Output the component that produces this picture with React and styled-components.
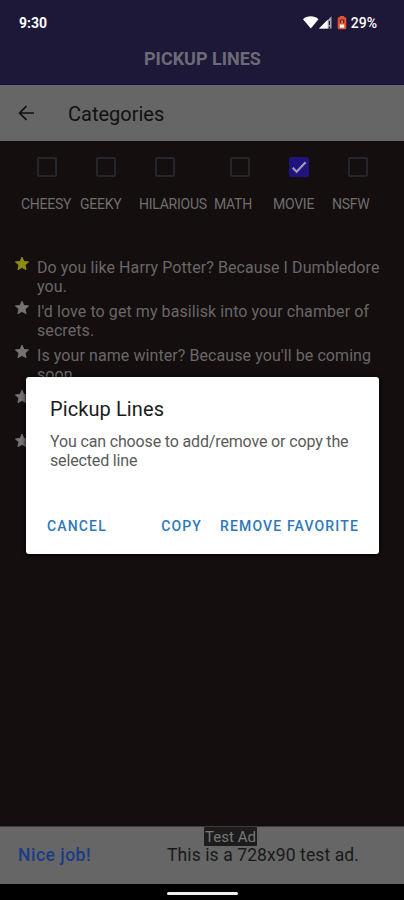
import React from 'react';
import styled, { createGlobalStyle } from 'styled-components';

const categories = [
  { name: 'CHEESY', width: 59 },
  { name: 'GEEKY', width: 59 },
  { name: 'HILARIOUS', width: 75 },
  { name: 'MATH', width: 59 },
  { name: 'MOVIE', width: 59, checked: true },
  { name: 'NSFW', width: 59 },
];

const lines = [
  { text: 'Do you like Harry Potter? Because I Dumbledore you.', favorite: true },
  { text: "I'd love to get my basilisk into your chamber of secrets." },
  { text: "Is your name winter? Because you'll be coming soon." },
  { text: '' },
  { text: '' },
];

const StatusIcons = () => (
  <svg width="46" height="16" viewBox="0 0 46 16">
    <path d="M0 4.2C4.2 0.4 11.3 0.4 15.5 4.2L7.8 13.5Z" fill="#fff" />
    <path d="M28.5 1.2V13.5H16Z" fill="#a5a3af" />
    <path d="M24.7 4.8V13.5H16Z" fill="#fff" />
    <path d="M26.4 6V10M26.4 11.6V13.5" stroke="#25203d" strokeWidth="1.2" />
    <path d="M36.8 1H41.2V2.2H42A1.3 1.3 0 0 1 43.3 3.5V13A1.3 1.3 0 0 1 42 14.3H36A1.3 1.3 0 0 1 34.7 13V3.5A1.3 1.3 0 0 1 36 2.2H36.8Z" fill="#e4532f" />
    <path d="M36.8 4.5H41.2V8H36.8Z" fill="#6e2a2a" />
    <path d="M38.2 5.5H39.8V8H38.2Z" fill="#f08a6c" />
    <path d="M36.8 9.5H41.2V12.7H36.8Z" fill="#fff" />
  </svg>
);

const App = () => {
  return (
    <>
      <GlobalStyle />
      <Screen>
        <StatusBar>
          <Time>9:30</Time>
          <StatusIcons />
          <Battery>29%</Battery>
        </StatusBar>
        <AppTitle>PICKUP LINES</AppTitle>
        <NavBar>
          <svg width="18" height="18" viewBox="0 0 18 18" fill="none" stroke="#101010" strokeWidth="1.7">
            <path d="M16 9H2.2M8.4 2.2L1.6 9L8.4 15.8" />
          </svg>
          <NavTitle>Categories</NavTitle>
        </NavBar>
        <Content>
          <Filters>
            {categories.map((category) => (
              <Category key={category.name} $width={category.width}>
                <Box $checked={category.checked}>
                  {category.checked && (
                    <svg width="20" height="20" viewBox="0 0 20 20" fill="none" stroke="#a09db5" strokeWidth="2.1">
                      <path d="M3.7 10.8L7.6 14.8L16.6 5.3" />
                    </svg>
                  )}
                </Box>
                <CategoryName>{category.name}</CategoryName>
              </Category>
            ))}
          </Filters>
          <List>
            {lines.map((line, index) => (
              <Line key={index}>
                <Star width="16" height="16" viewBox="0 0 16 16" $favorite={line.favorite}>
                  <path d="M8 1.1L9.9 5.4L14.6 5.9L11.1 9.1L12.1 13.7L8 11.4L3.9 13.7L4.9 9.1L1.4 5.9L6.1 5.4Z" />
                </Star>
                <LineText>{line.text}</LineText>
              </Line>
            ))}
          </List>
        </Content>
        <AdBanner>
          <AdAction>Nice job!</AdAction>
          <AdText>This is a 728x90 test ad.</AdText>
          <AdBadge>Test Ad</AdBadge>
        </AdBanner>
        <GestureBar>
          <Handle />
        </GestureBar>
        <Dialog>
          <DialogTitle>Pickup Lines</DialogTitle>
          <DialogMessage>You can choose to add/remove or copy the selected line</DialogMessage>
          <Actions>
            <Action>CANCEL</Action>
            <Spacer />
            <Action>COPY</Action>
            <Action>REMOVE FAVORITE</Action>
          </Actions>
        </Dialog>
      </Screen>
    </>
  );
};

const GlobalStyle = createGlobalStyle`
  * {
    box-sizing: border-box;
  }

  body {
    margin: 0;
    background: #000;
    font-family: Roboto, sans-serif;
  }
`;

const Screen = styled.div`
  position: relative;
  display: flex;
  flex-direction: column;
  width: 404px;
  height: 900px;
  overflow: hidden;
  background: #140e0e;
`;

const StatusBar = styled.div`
  display: flex;
  align-items: center;
  height: 45px;
  padding: 0 27px 0 19px;
  background: #1e1838;
  color: #fff;
`;

const Time = styled.span`
  flex: 1;
  font-size: 14px;
  font-weight: 700;
`;

const Battery = styled.span`
  margin-left: 2px;
  font-size: 14px;
  font-weight: 500;
`;

const AppTitle = styled.h1`
  height: 40px;
  margin: 0;
  padding: 3px 0 0 1px;
  border-bottom: 1px solid #17104a;
  background: #1e1838;
  color: #6c6a76;
  font-size: 18px;
  font-weight: 700;
  line-height: 22px;
  text-align: center;
`;

const NavBar = styled.div`
  display: flex;
  align-items: center;
  height: 56px;
  padding-left: 18px;
  background: #666;
`;

const NavTitle = styled.h2`
  margin: 1px 0 0 32px;
  color: #101010;
  font-size: 20px;
  font-weight: 400;
`;

const Content = styled.main`
  flex: 1;
  padding-top: 16px;
`;

const Filters = styled.div`
  display: flex;
  padding-left: 21px;
`;

const Category = styled.div`
  flex: none;
  width: ${({ $width }) => $width}px;
`;

const Box = styled.div`
  width: 20px;
  height: 20px;
  margin-left: 16px;
  border: ${({ $checked }) => ($checked ? 'none' : '2px solid #25262b')};
  border-radius: 2px;
  background: ${({ $checked }) => ($checked ? '#1f137d' : 'transparent')};
`;

const CategoryName = styled.div`
  margin-top: 18px;
  color: #706d6d;
  font-size: 14px;
  line-height: 18px;
  letter-spacing: -0.25px;
  white-space: nowrap;
`;

const List = styled.div`
  padding: 44px 16px 0 14px;
`;

const Line = styled.div`
  display: flex;
  height: 44.2px;
`;

const Star = styled.svg`
  flex: none;
  margin-right: 7px;
  margin-top: -1px;
  fill: ${({ $favorite }) => ($favorite ? '#8c8d10' : '#757272')};
  stroke: ${({ $favorite }) => ($favorite ? '#8c8d10' : '#757272')};
  stroke-width: 0.9;
  stroke-linejoin: round;
`;

const LineText = styled.p`
  margin: 0;
  padding-top: 1px;
  color: #6a6767;
  font-size: 16px;
  line-height: 19px;
  letter-spacing: 0.08px;
`;

const AdBanner = styled.div`
  position: relative;
  display: flex;
  align-items: center;
  height: 58px;
  padding: 0 0 1px 18px;
  border-top: 1px solid #3c3a3a;
  background: #666;
  font-size: 17.5px;
`;

const AdAction = styled.span`
  width: 149px;
  color: #193c85;
  font-weight: 500;
  letter-spacing: 0.5px;
`;

const AdText = styled.span`
  color: #191919;
  letter-spacing: 0.1px;
`;

const AdBadge = styled.span`
  position: absolute;
  top: 0;
  left: 204px;
  width: 53px;
  height: 19px;
  border-radius: 1px;
  background: #1c1c1c;
  color: #787878;
  font-size: 15px;
  line-height: 20px;
  text-align: center;
  white-space: nowrap;
`;

const GestureBar = styled.div`
  display: flex;
  justify-content: center;
  height: 16px;
  padding-top: 8px;
  background: #000;
`;

const Handle = styled.div`
  width: 71px;
  height: 3px;
  border-radius: 2px;
  background: #eee;
`;

const Dialog = styled.div`
  position: absolute;
  top: 377px;
  left: 26px;
  display: flex;
  flex-direction: column;
  width: 353px;
  height: 177px;
  padding: 20px 14px 13px;
  border-radius: 3px;
  background: #fff;
  box-shadow: 0 1px 4px #000;
`;

const DialogTitle = styled.h3`
  margin: 0 0 0 10px;
  color: #1b1b1b;
  font-size: 20px;
  font-weight: 400;
  line-height: 24px;
  letter-spacing: 0.1px;
`;

const DialogMessage = styled.p`
  margin: 11px 0 0 10px;
  color: #5a5a5a;
  font-size: 16px;
  line-height: 19px;
  letter-spacing: -0.15px;
`;

const Actions = styled.div`
  display: flex;
  align-items: center;
  height: 30px;
  margin-top: auto;
  padding: 0 6px 0 7px;
  gap: 18px;
`;

const Spacer = styled.div`
  flex: 1;
`;

const Action = styled.button`
  padding: 0;
  border: 0;
  background: none;
  color: #2e78ba;
  font-family: inherit;
  font-size: 14px;
  font-weight: 500;
  letter-spacing: 1.15px;
  white-space: nowrap;
`;

export default App;
